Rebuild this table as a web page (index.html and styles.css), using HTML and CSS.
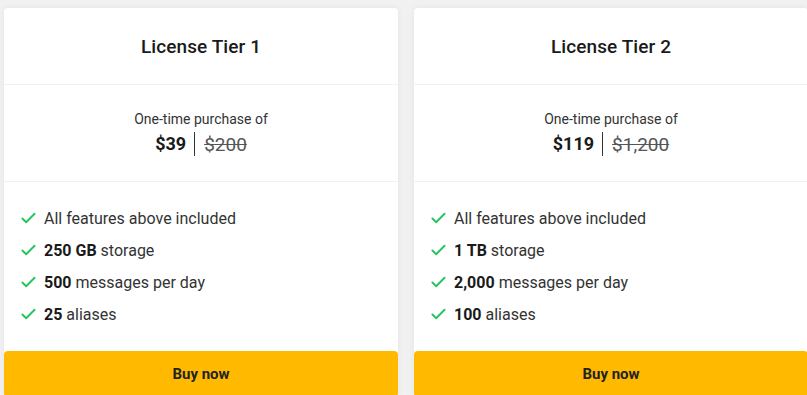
FILE: index.html
```html
<!DOCTYPE html>
<html lang="en">
<head>
    <meta charset="UTF-8">
    <meta name="viewport" content="width=device-width, initial-scale=1.0">
    <title>License tiers</title>
    <link rel="stylesheet" href="styles.css">
</head>
<body>
    <div class="tiers">
        <div class="card">
            <div class="card-head">License Tier 1</div>
            <div class="card-price">
                <div class="price-label">One-time purchase of</div>
                <div class="price-row">
                    <span class="price-now">$39</span>
                    <span class="price-old">$200</span>
                </div>
            </div>
            <ul class="features">
                <li><svg class="check" viewBox="0 0 16 12"><path d="M1.5 6.5l4 4 9-9"/></svg><span>All features above included</span></li>
                <li><svg class="check" viewBox="0 0 16 12"><path d="M1.5 6.5l4 4 9-9"/></svg><span><b>250 GB</b> storage</span></li>
                <li><svg class="check" viewBox="0 0 16 12"><path d="M1.5 6.5l4 4 9-9"/></svg><span><b>500</b> messages per day</span></li>
                <li><svg class="check" viewBox="0 0 16 12"><path d="M1.5 6.5l4 4 9-9"/></svg><span><b>25</b> aliases</span></li>
            </ul>
            <button class="buy-btn">Buy now</button>
        </div>

        <div class="card">
            <div class="card-head">License Tier 2</div>
            <div class="card-price">
                <div class="price-label">One-time purchase of</div>
                <div class="price-row">
                    <span class="price-now">$119</span>
                    <span class="price-old">$1,200</span>
                </div>
            </div>
            <ul class="features">
                <li><svg class="check" viewBox="0 0 16 12"><path d="M1.5 6.5l4 4 9-9"/></svg><span>All features above included</span></li>
                <li><svg class="check" viewBox="0 0 16 12"><path d="M1.5 6.5l4 4 9-9"/></svg><span><b>1 TB</b> storage</span></li>
                <li><svg class="check" viewBox="0 0 16 12"><path d="M1.5 6.5l4 4 9-9"/></svg><span><b>2,000</b> messages per day</span></li>
                <li><svg class="check" viewBox="0 0 16 12"><path d="M1.5 6.5l4 4 9-9"/></svg><span><b>100</b> aliases</span></li>
            </ul>
            <button class="buy-btn">Buy now</button>
        </div>
    </div>
</body>
</html>
```

FILE: styles.css
```css
body {
    margin: 0;
    font-family: Roboto, "Liberation Sans", Arial, sans-serif;
    background: #f1f1f1;
    color: #333;
    overflow: hidden;
}
.tiers {
    display: flex;
    gap: 16px;
    padding: 8px 0 0 4px;
}
.card {
    flex: 0 0 394px;
    background: #fff;
    border-radius: 4px;
    box-shadow: 0 0 6px rgba(0,0,0,0.06);
}
.card-head {
    height: 76px;
    display: flex;
    align-items: center;
    justify-content: center;
    font-size: 19px;
    font-weight: 500;
    color: #1a1a1a;
    letter-spacing: 0.1px;
    border-bottom: 1px solid #f1f1f1;
}
.card-price {
    height: 97px;
    box-sizing: border-box;
    padding-top: 25px;
    text-align: center;
    border-bottom: 1px solid #f1f1f1;
}
.price-label {
    font-size: 14px;
    line-height: 18px;
    color: #333;
}
.price-row {
    display: flex;
    justify-content: center;
    align-items: center;
    margin-top: 4px;
    height: 24px;
    font-size: 18px;
}
.price-now {
    font-weight: 700;
    color: #1a1a1a;
    padding-right: 8px;
    border-right: 1px solid #333;
    line-height: 24px;
}
.price-old {
    color: #555;
    font-size: 19px;
    text-decoration: line-through;
    padding-left: 9px;
}
.features {
    list-style: none;
    margin: 0;
    padding: 20px 0 21px 16px;
}
.features li {
    display: flex;
    align-items: center;
    height: 32px;
    font-size: 16px;
    color: #333;
}
.features b {
    font-weight: 700;
    color: #1a1a1a;
}
.check {
    width: 15px;
    height: 12px;
    margin: 0 8px 0 1px;
    fill: none;
    stroke: #22c55e;
    stroke-width: 2;
    stroke-linecap: round;
    stroke-linejoin: round;
}
.buy-btn {
    display: block;
    width: 100%;
    height: 46px;
    border: none;
    border-radius: 4px;
    background: #ffba00;
    color: #222;
    font-family: inherit;
    font-size: 15px;
    font-weight: 700;
    padding: 0;
}
```
